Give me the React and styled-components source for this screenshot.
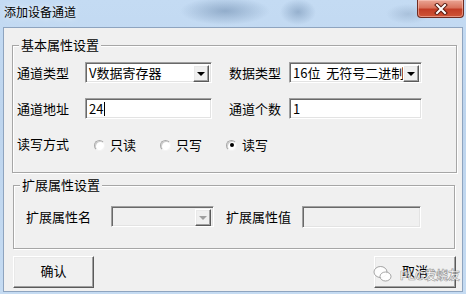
import React from "react";
import styled, { createGlobalStyle, css } from "styled-components";

const GlobalStyle = createGlobalStyle`
  html, body {
    margin: 0;
    padding: 0;
  }
  body {
    width: 466px;
    height: 294px;
    overflow: hidden;
    font-family: "Noto Sans CJK SC", "Noto Sans", sans-serif;
    font-size: 13px;
    color: #000;
  }
`;

const sunken = css`
  box-sizing: border-box;
  border: 1px solid;
  border-color: #a0a0a0 #ffffff #ffffff #a0a0a0;
  box-shadow: inset 1px 1px 0 #696969, inset -1px -1px 0 #e3e3e3;
`;

const raised = css`
  box-sizing: border-box;
  border: 1px solid;
  border-color: #ffffff #5a5a5a #5a5a5a #ffffff;
  box-shadow: inset -1px -1px 0 #a0a0a0, inset 1px 1px 0 #e9e9e9;
  background: #f0f0f0;
`;

const Window = styled.div`
  width: 466px;
  height: 294px;
  box-sizing: border-box;
  padding: 0 3px 2px 3px;
  display: flex;
  flex-direction: column;
  background:
    radial-gradient(ellipse 45px 14px at 225px 11px, rgba(105, 135, 170, 0.55), transparent),
    radial-gradient(ellipse 18px 13px at 298px 12px, rgba(105, 135, 170, 0.5), transparent),
    radial-gradient(ellipse 22px 10px at 408px 14px, rgba(130, 155, 185, 0.4), transparent),
    linear-gradient(180deg, #c4dbf3 0%, #bed5ee 40%, #c5dbf2 100%);
`;

const TitleBar = styled.div`
  height: 27px;
  flex: none;
  display: flex;
  justify-content: space-between;
  align-items: flex-start;
`;

const Title = styled.div`
  margin: 4px 0 0 1px;
  font-size: 12px;
  line-height: 16px;
  color: #000;
  text-shadow: 0 0 6px rgba(255, 255, 255, 0.9);
`;

const CloseButton = styled.div`
  width: 47px;
  height: 18px;
  margin-right: -1px;
  box-sizing: border-box;
  border: 1px solid #6f2c22;
  border-top: none;
  border-radius: 0 0 4px 4px;
  background: linear-gradient(180deg, #eaa594 0%, #d9735d 45%, #c23d26 55%, #cf5537 100%);
  box-shadow: inset 0 0 0 1px rgba(255, 210, 200, 0.5);
  display: flex;
  align-items: center;
  justify-content: center;
`;

const Client = styled.div`
  flex: 1;
  border: 1px solid #8ea4bf;
  background: #f0f0f0;
  display: flex;
  flex-direction: column;
`;

const GroupBox = styled.div`
  position: relative;
  box-sizing: border-box;
  margin: ${(p) => p.$top}px 0 0 ${(p) => p.$left}px;
  width: ${(p) => p.$w}px;
  height: ${(p) => p.$h}px;
  border: 1px solid #a6a6a6;
  box-shadow: 1px 1px 0 #ffffff, inset 1px 1px 0 #ffffff;
  padding: ${(p) => p.$pad};
  display: flex;
  flex-direction: column;
`;

const Legend = styled.span`
  position: absolute;
  top: -10px;
  left: 6px;
  padding: 0 2px;
  background: #f0f0f0;
  line-height: 18px;
`;

const Row = styled.div`
  display: flex;
  align-items: center;
  height: 21px;
  margin-top: ${(p) => p.$mt || 0}px;
`;

const Label = styled.span`
  width: ${(p) => p.$w}px;
  flex: none;
  white-space: nowrap;
  line-height: 18px;
  margin-left: ${(p) => p.$ml || 0}px;
`;

const TextField = styled.div`
  ${sunken};
  width: ${(p) => p.$w}px;
  height: ${(p) => p.$h || 21}px;
  flex: none;
  background: ${(p) => (p.$disabled ? "#f0f0f0" : "#ffffff")};
  display: flex;
  align-items: center;
  padding-left: 3px;
  line-height: 15px;
`;

const Caret = styled.span`
  width: 1px;
  height: 14px;
  background: #000;
  margin-left: 1px;
`;

const Select = styled.div`
  ${sunken};
  width: ${(p) => p.$w}px;
  height: 21px;
  flex: none;
  padding: 2px;
  display: flex;
  background: ${(p) => (p.$disabled ? "#f0f0f0" : "#ffffff")};
`;

const SelectText = styled.div`
  flex: 1;
  min-width: 0;
  overflow: hidden;
  white-space: pre;
  padding-left: 1px;
  display: flex;
  align-items: center;
  line-height: 17px;
`;

const ArrowButton = styled.div`
  ${raised};
  width: 16px;
  height: 17px;
  flex: none;
  display: flex;
  align-items: center;
  justify-content: center;
  &::after {
    content: "";
    border-left: 4px solid transparent;
    border-right: 4px solid transparent;
    border-top: 4px solid ${(p) => (p.$disabled ? "#a0a0a0" : "#000")};
    margin-top: 1px;
  }
`;

const RadioGroup = styled.div`
  display: flex;
  align-items: center;
  gap: 24px;
  margin-left: 9px;
`;

const RadioItem = styled.label`
  display: flex;
  align-items: center;
  gap: 5px;
  line-height: 18px;
  margin-top: 3px;
`;

const RadioCircle = styled.span`
  width: 11px;
  height: 11px;
  box-sizing: border-box;
  border-radius: 50%;
  border: 1px solid;
  border-color: #a8a8a8 #f4f4f4 #f4f4f4 #a8a8a8;
  box-shadow: inset 1px 1px 0 #cfcfcf;
  background: #ffffff;
  display: flex;
  align-items: center;
  justify-content: center;
  &::after {
    content: "";
    width: 4px;
    height: 4px;
    border-radius: 50%;
    background: ${(p) => (p.$checked ? "#000" : "transparent")};
  }
`;

const ButtonRow = styled.div`
  display: flex;
  justify-content: space-between;
  margin: 7px 6px 0 9px;
`;

const Button = styled.div`
  ${raised};
  position: relative;
  width: ${(p) => p.$w}px;
  height: 32px;
  display: flex;
  align-items: center;
  justify-content: center;
  line-height: 18px;
  padding-bottom: 2px;
`;

const Watermark = styled.div`
  position: absolute;
  left: -2px;
  top: 7px;
  display: flex;
  align-items: center;
  gap: 7px;
  white-space: nowrap;
  pointer-events: none;
`;

const WatermarkText = styled.span`
  font-family: "Liberation Sans", "Noto Sans CJK SC", sans-serif;
  font-size: 12px;
  font-weight: bold;
  line-height: 14px;
  white-space: nowrap;
  color: rgba(255, 255, 255, 0.8);
  -webkit-text-stroke: 0.6px rgba(110, 110, 110, 0.7);
  margin-top: 5px;
`;

const CloseIcon = () => (
  <svg width="14" height="12" viewBox="0 0 14 12">
    <path d="M3 2 L11 10 M11 2 L3 10" stroke="#5a1c12" strokeWidth="4" strokeLinecap="square" />
    <path d="M3 2 L11 10 M11 2 L3 10" stroke="#ffffff" strokeWidth="2" strokeLinecap="square" />
  </svg>
);

const WeChatMark = () => (
  <svg width="20" height="18" viewBox="0 0 20 18">
    <ellipse cx="7.5" cy="7" rx="6.5" ry="5.5" fill="rgba(255,255,255,0.85)" stroke="rgba(130,130,130,0.7)" />
    <ellipse cx="12.5" cy="11.5" rx="5.5" ry="4.5" fill="rgba(255,255,255,0.9)" stroke="rgba(130,130,130,0.7)" />
  </svg>
);

const Radio = ({ label, checked }) => (
  <RadioItem>
    <RadioCircle $checked={checked} />
    <span>{label}</span>
  </RadioItem>
);

const App = () => {
  return (
    <>
      <GlobalStyle />
      <Window>
        <TitleBar>
          <Title>添加设备通道</Title>
          <CloseButton>
            <CloseIcon />
          </CloseButton>
        </TitleBar>

        <Client>
          <GroupBox $top={17} $left={8} $w={445} $h={128} $pad="16px 0 0 4px">
            <Legend>基本属性设置</Legend>
            <Row>
              <Label $w={68}>通道类型</Label>
              <Select $w={127}>
                <SelectText>V数据寄存器</SelectText>
                <ArrowButton />
              </Select>
              <Label $w={60} $ml={17}>数据类型</Label>
              <Select $w={133}>
                <SelectText>16位  无符号二进制</SelectText>
                <ArrowButton />
              </Select>
            </Row>
            <Row $mt={15}>
              <Label $w={68}>通道地址</Label>
              <TextField $w={127}>
                24
                <Caret />
              </TextField>
              <Label $w={60} $ml={17}>通道个数</Label>
              <TextField $w={133}>1</TextField>
            </Row>
            <Row $mt={14}>
              <Label $w={68}>读写方式</Label>
              <RadioGroup>
                <Radio label="只读" />
                <Radio label="只写" />
                <Radio label="读写" checked />
              </RadioGroup>
            </Row>
          </GroupBox>

          <GroupBox $top={12} $left={9} $w={442} $h={64} $pad="20px 0 0 12px">
            <Legend>扩展属性设置</Legend>
            <Row>
              <Label $w={85}>扩展属性名</Label>
              <Select $w={103} $disabled>
                <SelectText />
                <ArrowButton $disabled />
              </Select>
              <Label $w={76} $ml={12}>扩展属性值</Label>
              <TextField $w={119} $h={22} $disabled />
            </Row>
          </GroupBox>

          <ButtonRow>
            <Button $w={81}>确认</Button>
            <Button $w={82}>
              取消
              <Watermark>
                <WeChatMark />
                <WatermarkText>PLC发烧友</WatermarkText>
              </Watermark>
            </Button>
          </ButtonRow>
        </Client>
      </Window>
    </>
  );
};

export default App;
